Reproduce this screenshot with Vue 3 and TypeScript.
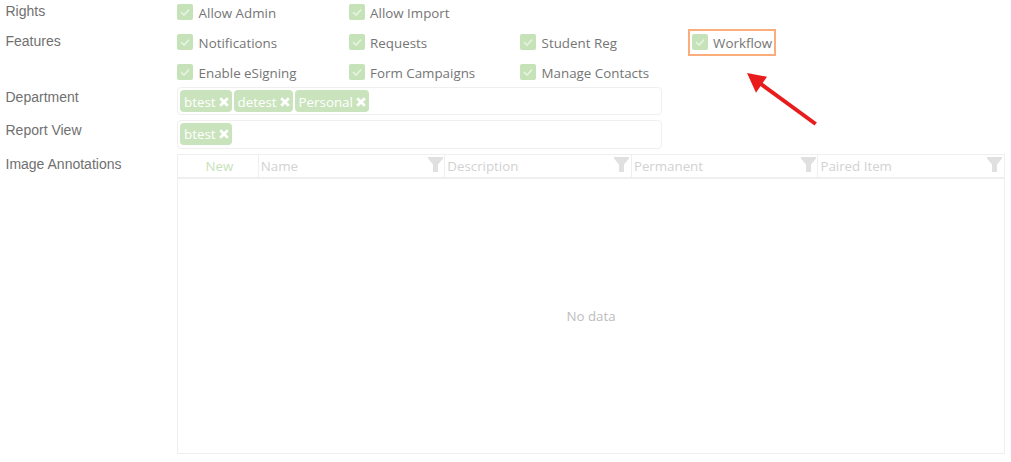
<script setup lang="ts">
const rows: { label: string; items: string[] }[] = [
  { label: 'Rights', items: ['Allow Admin', 'Allow Import'] },
  { label: 'Features', items: ['Notifications', 'Requests', 'Student Reg', 'Workflow'] },
  { label: '', items: ['Enable eSigning', 'Form Campaigns', 'Manage Contacts'] },
]
const columns = ['Name', 'Description', 'Permanent', 'Paired Item']
</script>

<template>
  <div class="page">
    <div v-for="row in rows" :key="row.items[0]" class="row check-row">
      <div class="label">{{ row.label }}</div>
      <div class="checks">
        <div v-for="item in row.items" :key="item" class="check">
          <span class="box">
            <svg width="16" height="16" viewBox="0 0 16 16"><path d="M4 8.2 7 11 12 5.6" fill="none" stroke="#e6f3e0" stroke-width="1.6" /></svg>
          </span>
          <span class="check-text">{{ item }}</span>
          <span v-if="item === 'Workflow'" class="highlight"></span>
        </div>
      </div>
    </div>

    <div class="row tag-row first">
      <div class="label">Department</div>
      <div class="tagbox">
        <span v-for="t in ['btest', 'detest', 'Personal']" :key="t" class="tag">{{ t }}<svg class="x" width="10" height="10" viewBox="0 0 10 10"><path d="M1.2 1.2 8.8 8.8M8.8 1.2 1.2 8.8" stroke="#fff" stroke-width="2.7" fill="none" /></svg></span>
      </div>
    </div>
    <div class="row tag-row second">
      <div class="label">Report View</div>
      <div class="tagbox">
        <span class="tag">btest<svg class="x" width="10" height="10" viewBox="0 0 10 10"><path d="M1.2 1.2 8.8 8.8M8.8 1.2 1.2 8.8" stroke="#fff" stroke-width="2.7" fill="none" /></svg></span>
      </div>
    </div>

    <div class="row grid-row">
      <div class="label">Image Annotations</div>
      <div class="grid">
        <div class="head">
          <div class="new">New</div>
          <div v-for="c in columns" :key="c" class="col">
            <span>{{ c }}</span>
            <svg class="funnel" width="15" height="15" viewBox="0 0 15 15"><path d="M0 0H15V1.5L10 7.5V15H5V7.5L0 1.5Z" fill="#e0e0e0" /></svg>
          </div>
        </div>
        <div class="empty">No data</div>
      </div>
    </div>

    <svg class="arrow" width="80" height="62" viewBox="0 0 80 62">
      <path d="M69.7 52 15 12" stroke="#e81c1c" stroke-width="4" fill="none" />
      <path d="M1 1 21 4.7 10 20.7Z" fill="#e81c1c" />
    </svg>
  </div>
</template>

<style>
html, body { margin: 0; background: #fff; }
</style>

<style scoped>
.page {
  position: relative;
  width: 1011px;
  height: 462px;
  overflow: hidden;
  background: #fff;
  box-sizing: border-box;
  font-family: "Open Sans", sans-serif;
}
.row { display: flex; }
.label {
  width: 171.5px;
  padding-left: 5.5px;
  flex: none;
  font: 14px/20px "Liberation Sans", Arial, sans-serif;
  color: #707070;
}
.check-row { height: 30px; }
.check-row .label { margin-top: 1px; }
.checks { display: flex; padding-top: 4px; }
.check {
  position: relative;
  width: 171.5px;
  height: 16px;
  display: flex;
  align-items: center;
}
.box {
  width: 16px;
  height: 16px;
  flex: none;
  border-radius: 2px;
  background: #c6e2b8;
  display: block;
}
.box svg { display: block; }
.check-text {
  margin-left: 5.6px;
  font-size: 13.35px;
  line-height: 18px;
  color: #757575;
  position: relative;
  top: 1px;
  white-space: nowrap;
}
.highlight {
  position: absolute;
  left: -4px;
  top: -5px;
  width: 84px;
  height: 23px;
  border: 2px solid #fbad7b;
}
.tag-row.first { margin-top: -3px; height: 33px; }
.tag-row.second { height: 34px; }
.tagbox {
  width: 485px;
  height: 28px;
  box-sizing: border-box;
  border: 1px solid #efefef;
  border-radius: 4px;
  padding: 2px;
  display: flex;
  align-items: flex-start;
  gap: 2px;
}
.tag-row.second .tagbox { height: 29px; }
.tag {
  height: 22px;
  box-sizing: border-box;
  display: inline-flex;
  align-items: center;
  padding: 0 3px 0 4px;
  border-radius: 4px;
  background: #c9e3bc;
  color: #fff;
  font-size: 13.35px;
  line-height: 22px;
}
.first .tag { padding-top: 1px; }
.x {
  margin-left: 3px;
  display: block;
}
.grid {
  width: 828px;
  height: 300px;
  box-sizing: border-box;
  border: 1px solid #efefef;
  display: flex;
  flex-direction: column;
}
.head {
  height: 24px;
  box-sizing: border-box;
  border-bottom: 2px solid #efefef;
  display: flex;
  font-size: 13.3px;
  line-height: 22px;
  color: #d2d2d2;
}
.new {
  width: 79.8px;
  flex: none;
  box-sizing: border-box;
  padding-left: 3px;
  text-align: center;
  color: #c6e2b8;
}
.col {
  flex: 1;
  position: relative;
  border-left: 1px solid #efefef;
  padding-left: 2px;
  white-space: nowrap;
}
.funnel { position: absolute; right: 1.5px; top: 2px; }
.empty {
  flex: 1;
  display: flex;
  align-items: center;
  justify-content: center;
  font-size: 13.3px;
  color: #bdbdbd;
}
.arrow { position: absolute; left: 746px; top: 72px; }
</style>
